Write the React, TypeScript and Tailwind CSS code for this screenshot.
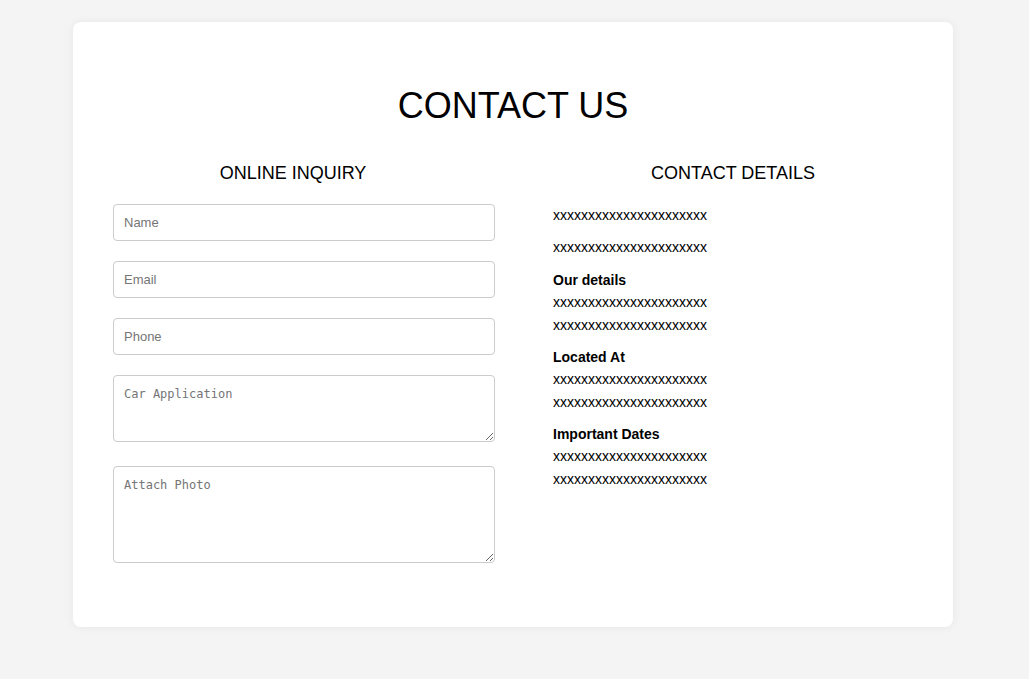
import React from 'react';

const sans = { fontFamily: '"Liberation Sans", Arial, sans-serif' };

const Line = () => <p className="leading-[23px]">xxxxxxxxxxxxxxxxxxxxxx</p>;

export default function App() {
    return (
        <div className="min-h-screen bg-[#f4f4f4] pt-[22px] text-black" style={sans}>
            <div className="ml-[73px] w-[880px] rounded-lg bg-white px-[40px] pt-[64px] pb-[64px] shadow-[0_0_10px_rgba(0,0,0,0.06)]">
                <h1 className="text-center text-[36px] leading-[40px]">CONTACT US</h1>

                <div className="mt-[35px] grid grid-cols-[360px_360px] gap-x-[80px]">
                    {/* Online inquiry form */}
                    <div>
                        <h2 className="text-center text-[18px] leading-[24px]">ONLINE INQUIRY</h2>
                        <div className="mt-[19px] flex flex-col">
                            <input
                                placeholder="Name"
                                className="box-content h-[35px] w-full rounded border border-[#cccccc] px-[10px] text-[13px] placeholder:text-[#757575] outline-none"
                            />
                            <input
                                placeholder="Email"
                                className="mt-[20px] box-content h-[35px] w-full rounded border border-[#cccccc] px-[10px] text-[13px] placeholder:text-[#757575] outline-none"
                            />
                            <input
                                placeholder="Phone"
                                className="mt-[20px] box-content h-[35px] w-full rounded border border-[#cccccc] px-[10px] text-[13px] placeholder:text-[#757575] outline-none"
                            />
                            <textarea
                                placeholder="Car Application"
                                className="mt-[20px] box-content h-[45px] w-full resize-y rounded border border-[#cccccc] p-[10px] font-['DejaVu_Sans_Mono',monospace] text-[12px] leading-[16px] placeholder:text-[#757575] outline-none"
                            />
                            <textarea
                                placeholder="Attach Photo"
                                className="mt-[24px] box-content h-[75px] w-full resize-y rounded border border-[#cccccc] p-[10px] font-['DejaVu_Sans_Mono',monospace] text-[12px] leading-[16px] placeholder:text-[#757575] outline-none"
                            />
                        </div>
                    </div>

                    {/* Contact details */}
                    <div>
                        <h2 className="text-center text-[18px] leading-[24px]">CONTACT DETAILS</h2>
                        <div className="mt-[19px] text-[14px]">
                            <Line />
                            <div className="mt-[9px]"><Line /></div>
                            <p className="mt-[10px] font-bold leading-[22px]">Our details</p>
                            <Line />
                            <Line />
                            <p className="mt-[9px] font-bold leading-[22px]">Located At</p>
                            <Line />
                            <Line />
                            <p className="mt-[9px] font-bold leading-[22px]">Important Dates</p>
                            <Line />
                            <Line />
                        </div>
                    </div>
                </div>
            </div>
        </div>
    );
}
